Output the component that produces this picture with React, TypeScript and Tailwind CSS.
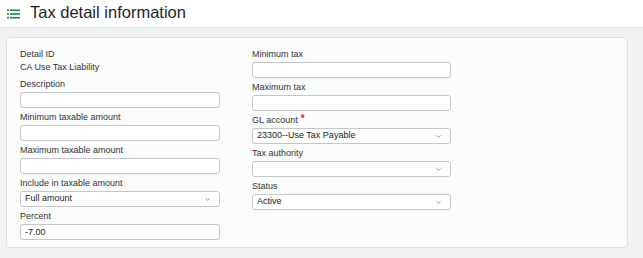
import { ChevronDown } from "lucide-react";

const font = { fontFamily: '"Liberation Sans", Arial, sans-serif' };

const Label = ({ text, required }: { text: string; required?: boolean }) => (
  <div className="h-[11px] text-[9px] leading-[11px] mb-[2px] text-[#333] font-medium flex items-start">
    {text}
    {required && (
      <span className="text-[#e0201f] ml-[3px] font-bold text-[10px] leading-[8px]">*</span>
    )}
  </div>
);

const TextField = ({ label, value }: { label: string; value?: string }) => (
  <div className="mb-1">
    <Label text={label} />
    <div className="h-4 rounded-[3px] border border-[#c4c7ca] bg-white px-[4px] text-[9px] leading-[14px] text-[#222]">
      {value}
    </div>
  </div>
);

const SelectField = ({ label, value, required }: { label: string; value?: string; required?: boolean }) => (
  <div className="mb-1">
    <Label text={label} required={required} />
    <div className="h-4 rounded-[3px] border border-[#c4c7ca] bg-white pl-[4px] pr-[8px] flex items-center justify-between text-[9px] text-[#222]">
      <span>{value}</span>
      <ChevronDown className="w-[7px] h-[7px] text-[#777]" strokeWidth={2.5} />
    </div>
  </div>
);

export default function App() {
  return (
    <div className="w-[643px] h-[258px] bg-[#f1f2f3] text-[#222]" style={font}>
      <header className="h-[28px] bg-white border-b border-[#e3e5e7] flex items-center pl-[7px]">
        <svg width="13" height="10" viewBox="0 0 13 10" className="mr-[10px]">
          <g fill="#1d8a4c">
            <rect x="0" y="0.5" width="2" height="1.6" />
            <rect x="0" y="4.2" width="2" height="1.6" />
            <rect x="0" y="7.9" width="2" height="1.6" />
            <rect x="3" y="0.5" width="10" height="1.6" />
            <rect x="3" y="4.2" width="10" height="1.6" />
            <rect x="3" y="7.9" width="10" height="1.6" />
          </g>
        </svg>
        <h1 className="text-[16.5px] leading-none text-[#1f1f1f] mt-[-2px]">Tax detail information</h1>
      </header>

      <div className="pt-[9px] px-[6px]">
        <div className="w-[622px] h-[211px] rounded-[4px] border border-[#dcdfe2] bg-[#fbfcfc] pt-[11px] pl-[13px] flex gap-[32px]">
          <div className="w-[200px]">
            <Label text="Detail ID" />
            <div className="text-[9px] leading-[11px] text-[#333] mb-[6px]">CA Use Tax Liability</div>
            <TextField label="Description" />
            <TextField label="Minimum taxable amount" />
            <TextField label="Maximum taxable amount" />
            <SelectField label="Include in taxable amount" value="Full amount" />
            <TextField label="Percent" value="-7.00" />
          </div>
          <div className="w-[199px]">
            <TextField label="Minimum tax" />
            <TextField label="Maximum tax" />
            <SelectField label="GL account" value="23300--Use Tax Payable" required />
            <SelectField label="Tax authority" />
            <SelectField label="Status" value="Active" />
          </div>
        </div>
      </div>
    </div>
  );
}
